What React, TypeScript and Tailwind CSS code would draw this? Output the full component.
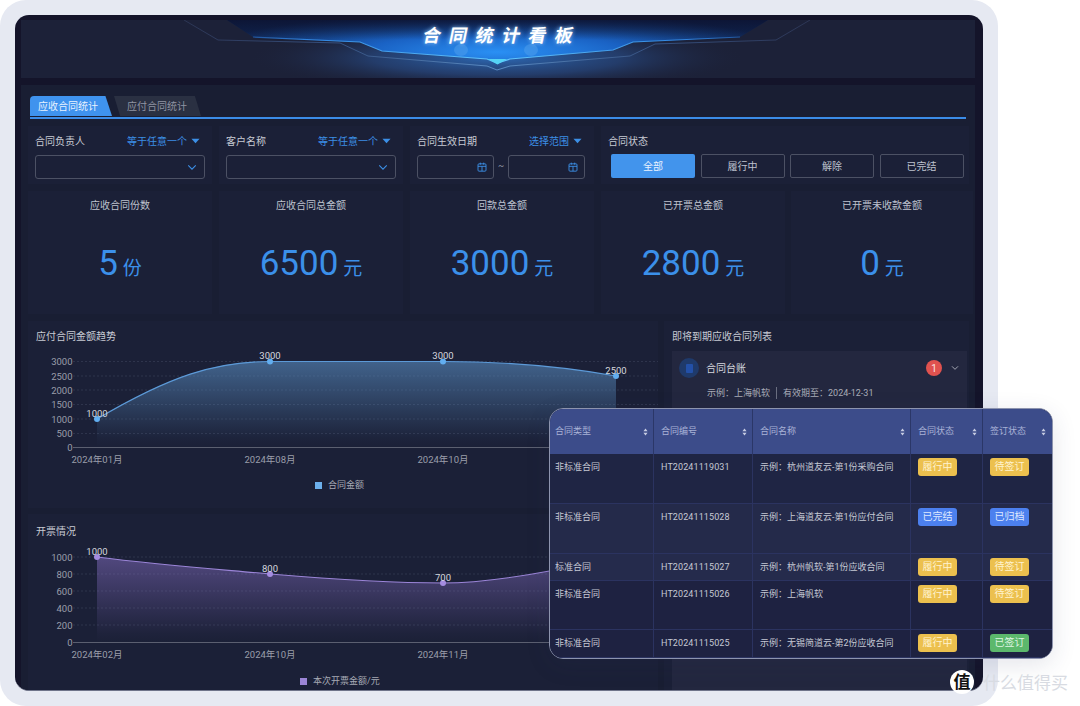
import React from "react";

const FONT = "font-['Roboto','Noto_Sans_CJK_SC',sans-serif]";

function Chevron({ className }: { className: string }) {
  return (
    <svg viewBox="0 0 12 8" className={className} fill="none" stroke="currentColor" strokeWidth="1.3">
      <path d="M1.5 1.5 6 6l4.5-4.5" />
    </svg>
  );
}

function Caret() {
  return (
    <svg viewBox="0 0 10 6" className="h-[6px] w-[9px] text-[#3c8fe6]" fill="currentColor">
      <path d="M0.5 0.5h9L5 5.5z" />
    </svg>
  );
}

function Calendar() {
  return (
    <svg viewBox="0 0 12 12" className="h-[10px] w-[10px] text-[#3c8fe6]" fill="none" stroke="currentColor" strokeWidth="1.1">
      <rect x="1.2" y="2.2" width="9.6" height="8.8" rx="1.2" />
      <path d="M1.2 5.2h9.6M4 .8v2.4M8 .8v2.4M6 5.2V11" />
    </svg>
  );
}

function Sort() {
  return (
    <svg viewBox="0 0 6 10" className="h-[8px] w-[5px] text-[#c6cce2]" fill="currentColor">
      <path d="M3 0.5 5.6 4.2H.4zM3 9.5.4 5.8h5.2z" />
    </svg>
  );
}

function FilterCard({ label, mode, children, wide }: { label: string; mode?: string; children: React.ReactNode; wide?: boolean }) {
  return (
    <div className={`h-[58px] shrink-0 bg-[#1b2037] px-[7px] pt-[8px] ${wide ? "w-[368px]" : "w-[184px]"}`}>
      <div className="flex h-[14px] items-center justify-between text-[10px] text-[#c8cbd4]">
        <span>{label}</span>
        {mode && (
          <span className="flex items-center gap-[4px] pr-[5px] text-[#3c8fe6]">
            {mode}
            <Caret />
          </span>
        )}
      </div>
      {children}
    </div>
  );
}

function Select() {
  return (
    <div className="mt-[7px] flex h-[24px] w-[170px] items-center justify-end rounded-[3px] border border-[#4c5164] pr-[7px] text-[#3c8fe6]">
      <Chevron className="h-[7px] w-[10px]" />
    </div>
  );
}

function DateBox() {
  return (
    <div className="flex h-[24px] w-[77px] items-center justify-end rounded-[3px] border border-[#4c5164] pr-[6px]">
      <Calendar />
    </div>
  );
}

function Stat({ label, value, unit, last }: { label: string; value: string; unit: string; last?: boolean }) {
  return (
    <div className={`flex h-[123px] shrink-0 flex-col items-center bg-[#1b2037] pt-[8px] ${last ? "ml-[-1px] w-[182px]" : "w-[184px]"}`}>
      <div className="h-[14px] text-[10px] leading-[14px] text-[#bfc3cf]">{label}</div>
      <div className="mt-[30px] flex items-baseline gap-[5px] text-[#3b90ea]">
        <span className="text-[35px] leading-[42px]">{value}</span>
        <span className="text-[19px] leading-[24px]">{unit}</span>
      </div>
    </div>
  );
}

function TrendChart() {
  const grid = [361.5, 376, 390, 404.5, 419, 433.5];
  const ticks = ["3000", "2500", "2000", "1500", "1000", "500", "0"];
  const ys = [361.5, 376, 390, 404.5, 419, 433.5, 447.5];
  const pts: [number, number, string][] = [[97, 419, "1000"], [270, 361.5, "3000"], [443, 361.5, "3000"], [616, 376, "2500"]];
  const line = "M97 419C170 376 215 361.5 270 361.5C330 361.5 385 361.5 443 361.5C505 361.5 565 367 616 376";
  const labels: [number, string][] = [[97, "2024年01月"], [270, "2024年08月"], [443, "2024年10月"], [616, "2024年12月"]];
  return (
    <svg viewBox="28 351 630 157" className="block h-[157px] w-[630px] overflow-visible">
      <defs>
        <linearGradient id="blueFill" gradientUnits="userSpaceOnUse" x1="0" y1="361" x2="0" y2="447">
          <stop offset="0" stopColor="#5a8fc4" stopOpacity="0.6" />
          <stop offset="0.9" stopColor="#5a8fc4" stopOpacity="0.03" />
          <stop offset="1" stopColor="#5a8fc4" stopOpacity="0" />
        </linearGradient>
      </defs>
      {grid.map((y) => (
        <line key={y} x1="73" x2="658" y1={y} y2={y} stroke="#343a52" strokeWidth="0.8" strokeDasharray="2 2" />
      ))}
      <path d={`${line}L616 447L97 447Z`} fill="url(#blueFill)" />
      <path d={line} fill="none" stroke="#5c9ad8" strokeWidth="1.1" />
      <line x1="73" x2="658" y1="447.5" y2="447.5" stroke="#5b5f70" strokeWidth="1.2" />
      {ticks.map((t, i) => (
        <text key={t} x="72.5" y={ys[i] + 3.5} textAnchor="end" fontSize="9.5" fill="#9a9eaa">{t}</text>
      ))}
      {pts.map(([x, y, v]) => (
        <g key={x}>
          <circle cx={x} cy={y} r="3" fill="#62aef0" />
          <text x={x} y={y - 2.5} textAnchor="middle" fontSize="9.5" fill="#d5d7de">{v}</text>
        </g>
      ))}
      {labels.map(([x, v]) => (
        <text key={x} x={x} y="463" textAnchor="middle" fontSize="9.5" fill="#9a9eaa">{v}</text>
      ))}
    </svg>
  );
}

function InvoiceChart() {
  const grid = [557, 574, 591, 608, 625];
  const ticks = ["1000", "800", "600", "400", "200", "0"];
  const ys = [557, 574, 591, 608, 625, 642.5];
  const pts: [number, number, string][] = [[97, 557, "1000"], [270, 574, "800"], [443, 583, "700"], [616, 557, "1000"]];
  const line = "M97 557C160 565 215 569 270 574C330 579 390 583 443 583C495 583 560 570 616 557";
  const labels: [number, string][] = [[97, "2024年02月"], [270, "2024年10月"], [443, "2024年11月"], [616, "2024年12月"]];
  return (
    <svg viewBox="28 546 630 144" className="block h-[144px] w-[630px] overflow-visible">
      <defs>
        <linearGradient id="purpleFill" gradientUnits="userSpaceOnUse" x1="0" y1="557" x2="0" y2="642">
          <stop offset="0" stopColor="#8c74cc" stopOpacity="0.48" />
          <stop offset="0.9" stopColor="#8c74cc" stopOpacity="0.03" />
          <stop offset="1" stopColor="#8c74cc" stopOpacity="0" />
        </linearGradient>
      </defs>
      {grid.map((y) => (
        <line key={y} x1="73" x2="658" y1={y} y2={y} stroke="#343a52" strokeWidth="0.8" strokeDasharray="2 2" />
      ))}
      <path d={`${line}L616 642.5L97 642.5Z`} fill="url(#purpleFill)" />
      <path d={line} fill="none" stroke="#9b85d8" strokeWidth="1.1" />
      <line x1="73" x2="658" y1="642.5" y2="642.5" stroke="#5b5f70" strokeWidth="1.2" />
      {ticks.map((t, i) => (
        <text key={t} x="72.5" y={ys[i] + 3.5} textAnchor="end" fontSize="9.5" fill="#9a9eaa">{t}</text>
      ))}
      {pts.map(([x, y, v]) => (
        <g key={x}>
          <circle cx={x} cy={y} r="3" fill="#a48ce0" />
          <text x={x} y={y - 2.5} textAnchor="middle" fontSize="9.5" fill="#d5d7de">{v}</text>
        </g>
      ))}
      {labels.map(([x, v]) => (
        <text key={x} x={x} y="658" textAnchor="middle" fontSize="9.5" fill="#9a9eaa">{v}</text>
      ))}
    </svg>
  );
}

function Header() {
  const shape = "M227 20 253 37 360 42 382 51 487 59 497 63 510 59 613 50 633 42 740 37 768 20Z";
  return (
    <div className="relative h-[58px] bg-[#1c2138]">
      <svg viewBox="21 20 954 58" className="block h-[58px] w-[954px]">
        <defs>
          <radialGradient id="glowLow" gradientUnits="userSpaceOnUse" cx="0" cy="0" r="1" gradientTransform="translate(497 58) scale(250 34)">
            <stop offset="0" stopColor="#2f74c8" stopOpacity="0.85" />
            <stop offset="0.5" stopColor="#2a5394" stopOpacity="0.55" />
            <stop offset="1" stopColor="#1c2138" stopOpacity="0" />
          </radialGradient>
          <radialGradient id="glowTop" gradientUnits="userSpaceOnUse" cx="0" cy="0" r="1" gradientTransform="translate(497 52) scale(290 40)">
            <stop offset="0" stopColor="#2a90f4" />
            <stop offset="0.45" stopColor="#1a62c4" />
            <stop offset="1" stopColor="#10244e" />
          </radialGradient>
          <linearGradient id="topFade" gradientUnits="userSpaceOnUse" x1="0" y1="20" x2="0" y2="40">
            <stop offset="0" stopColor="#0c1230" stopOpacity="0.8" />
            <stop offset="1" stopColor="#0c1230" stopOpacity="0" />
          </linearGradient>
          <linearGradient id="brightLine" gradientUnits="userSpaceOnUse" x1="227" y1="0" x2="768" y2="0">
            <stop offset="0" stopColor="#1b3f7c" />
            <stop offset="0.15" stopColor="#2f82de" />
            <stop offset="0.5" stopColor="#63c8ff" />
            <stop offset="0.85" stopColor="#2f82de" />
            <stop offset="1" stopColor="#1b3f7c" />
          </linearGradient>
          <linearGradient id="dimLine" gradientUnits="userSpaceOnUse" x1="184" y1="0" x2="810" y2="0">
            <stop offset="0" stopColor="#2c3554" />
            <stop offset="0.25" stopColor="#35507f" />
            <stop offset="0.5" stopColor="#5a8cc4" />
            <stop offset="0.75" stopColor="#35507f" />
            <stop offset="1" stopColor="#2c3554" />
          </linearGradient>
        </defs>
        <rect x="21" y="20" width="954" height="58" fill="url(#glowLow)" />
        <path d={shape} fill="url(#glowTop)" />
        <path d={shape} fill="url(#topFade)" />
        <path d="M184 20 218 40 340 43 368 56 487 66 497 70 510 66 630 56 655 44 776 40 810 20" fill="none" stroke="url(#dimLine)" strokeWidth="1" />
        <path d="M253 37 360 42 382 51 487 59 497 63 510 59 613 50 633 42 740 37" fill="none" stroke="url(#brightLine)" strokeWidth="1.2" />
        <path d="M488 59h19l-9.500 5.500z" fill="#55d4f6" />
        <ellipse cx="461" cy="50" rx="7" ry="6" fill="#5ca8ee" fillOpacity="0.4" />
        <ellipse cx="531" cy="50" rx="7" ry="6" fill="#5ca8ee" fillOpacity="0.4" />
      </svg>
      <div className="absolute left-[402px] top-[4px] -skew-x-12 text-[18px] font-bold leading-[24px] tracking-[8.4px] whitespace-nowrap text-white [text-shadow:0_0_4px_#9fd0ff]">
        合同统计看板
      </div>
    </div>
  );
}

type Tag = { t: string; c: string };
const yellow = "bg-[#ecc04e] text-[#fff3cf]";
const blue = "bg-[#4c80ee] text-[#dfe9ff]";
const green = "bg-[#5cb86c] text-[#dff5e2]";

const rows: { h: string; bg: string; type: string; no: string; name: string; a: Tag; b: Tag }[] = [
  { h: "h-[50px]", bg: "bg-[#1f2544]", type: "非标准合同", no: "HT20241119031", name: "示例：杭州道友云-第1份采购合同", a: { t: "履行中", c: yellow }, b: { t: "待签订", c: yellow } },
  { h: "h-[50px]", bg: "bg-[#242a4a]", type: "非标准合同", no: "HT20241115028", name: "示例：上海道友云-第1份应付合同", a: { t: "已完结", c: blue }, b: { t: "已归档", c: blue } },
  { h: "h-[27px]", bg: "bg-[#252b4c]", type: "标准合同", no: "HT20241115027", name: "示例：杭州帆软-第1份应收合同", a: { t: "履行中", c: yellow }, b: { t: "待签订", c: yellow } },
  { h: "h-[49px]", bg: "bg-[#1e2241]", type: "非标准合同", no: "HT20241115026", name: "示例：上海帆软", a: { t: "履行中", c: yellow }, b: { t: "待签订", c: yellow } },
  { h: "h-[28px]", bg: "bg-[#1e2241]", type: "非标准合同", no: "HT20241115025", name: "示例：无锡简道云-第2份应收合同", a: { t: "履行中", c: yellow }, b: { t: "已签订", c: green } },
];

function Badge({ tag }: { tag: Tag }) {
  return <span className={`mt-[4px] flex h-[18px] w-[39px] items-center justify-center rounded-[3px] text-[10px] ${tag.c}`}>{tag.t}</span>;
}

function HeadCell({ w, label, first, last }: { w: string; label: string; first?: boolean; last?: boolean }) {
  return (
    <div className={`flex h-full items-center justify-between pr-[5px] ${first ? "pl-[5px]" : "pl-[7px]"} ${w} ${last ? "" : "border-r border-[#2b3768]"}`}>
      <span>{label}</span>
      <Sort />
    </div>
  );
}

function Table() {
  return (
    <div className="absolute left-[549px] top-[408px] h-[251px] w-[504px] overflow-hidden rounded-[14px] border-[1.5px] border-[#8d94ae] bg-[#1e2241] shadow-[0_6px_24px_rgba(40,50,90,0.12)]">
      <div className="flex h-[45px] bg-[#3c4c8a] text-[9px] text-[#a9b2d6]">
        <HeadCell w="w-[104px]" label="合同类型" first />
        <HeadCell w="w-[99px]" label="合同编号" />
        <HeadCell w="w-[158px]" label="合同名称" />
        <HeadCell w="w-[72px]" label="合同状态" />
        <HeadCell w="w-[68px]" label="签订状态" last />
      </div>
      {rows.map((r) => (
        <div key={r.no} className={`flex border-b border-[#2b3360] text-[9px] leading-[14px] text-[#c6c9d4] ${r.h} ${r.bg}`}>
          <div className="w-[104px] border-r border-[#2b3360] pl-[5px] pt-[6px]">{r.type}</div>
          <div className="w-[99px] border-r border-[#2b3360] pl-[7px] pt-[6px] tracking-[0.1px]">{r.no}</div>
          <div className="w-[158px] border-r border-[#2b3360] pl-[7px] pt-[6px]">{r.name}</div>
          <div className="w-[72px] border-r border-[#2b3360] pl-[7px]"><Badge tag={r.a} /></div>
          <div className="w-[68px] pl-[7px]"><Badge tag={r.b} /></div>
        </div>
      ))}
    </div>
  );
}

export default function App() {
  return (
    <div className={`relative h-[706px] w-[1080px] overflow-hidden bg-white ${FONT}`}>
      <div className="h-[706px] w-[998px] rounded-[26px] bg-[#e6e9f2] p-[15px]">
        <div className="h-[676px] overflow-hidden rounded-[14px] border-b border-[#6f748a] bg-[#14142a] pl-[6px] pr-[8px] pt-[5px]">
          <Header />
          <div className="mt-[7px] h-[606px] bg-[#191e33] px-[7px] pt-[11px]">
            <div className="ml-[2px] mr-[2px] flex h-[23px] gap-[2px] border-b-2 border-[#3b8ce8]">
              <div className="flex h-[20px] w-[82px] items-center rounded-tl-[4px] bg-[#3f93ee] pl-[8px] text-[10px] text-[#e8f2ff] [clip-path:polygon(0_0,92%_0,100%_100%,0_100%)]">
                应收合同统计
              </div>
              <div className="flex h-[20px] w-[87px] items-center bg-[#2a3042] pl-[13px] text-[10px] text-[#8f94a3] [clip-path:polygon(0_0,93%_0,100%_100%,7%_100%)]">
                应付合同统计
              </div>
            </div>
            <div className="mt-[7px] flex gap-[7px]">
              <FilterCard label="合同负责人" mode="等于任意一个"><Select /></FilterCard>
              <FilterCard label="客户名称" mode="等于任意一个"><Select /></FilterCard>
              <FilterCard label="合同生效日期" mode="选择范围">
                <div className="mt-[7px] flex items-center">
                  <DateBox />
                  <span className="w-[14px] text-center text-[9px] text-[#9a9eaa]">~</span>
                  <DateBox />
                </div>
              </FilterCard>
              <FilterCard label="合同状态" wide>
                <div className="mt-[6px] flex gap-[5.5px] pl-[3px] text-[10px] text-[#bfc3cf]">
                  <div className="flex h-[24px] w-[84px] shrink-0 items-center justify-center rounded-[2px] bg-[#4294ec] text-[#e8f2ff]">全部</div>
                  <div className="flex h-[24px] w-[84px] shrink-0 items-center justify-center rounded-[2px] border border-[#4c5164]">履行中</div>
                  <div className="flex h-[24px] w-[84px] shrink-0 items-center justify-center rounded-[2px] border border-[#4c5164]">解除</div>
                  <div className="flex h-[24px] w-[84px] shrink-0 items-center justify-center rounded-[2px] border border-[#4c5164]">已完结</div>
                </div>
              </FilterCard>
            </div>
            <div className="mt-[7px] flex gap-[7px]">
              <Stat label="应收合同份数" value="5" unit="份" />
              <Stat label="应收合同总金额" value="6500" unit="元" />
              <Stat label="回款总金额" value="3000" unit="元" />
              <Stat label="已开票总金额" value="2800" unit="元" />
              <Stat label="已开票未收款金额" value="0" unit="元" last />
            </div>
            <div className="mt-[7px] flex gap-[6px]">
              <div className="w-[630px] shrink-0">
                <div className="relative h-[187px] bg-[#1b2037]">
                  <div className="flex h-[30px] items-center pl-[8px] text-[10px] text-[#c8cbd4]">应付合同金额趋势</div>
                  <TrendChart />
                  <div className="absolute left-[287px] top-[158px] flex items-center gap-[3px] text-[9px] text-[#a6a9b4]">
                    <span className="h-[7px] w-[7px] bg-[#6cb0ec]" />
                    <span className="ml-[3px]">合同金额</span>
                  </div>
                </div>
                <div className="relative mt-[6px] h-[176px] bg-[#1b2037]">
                  <div className="flex h-[32px] items-center pl-[8px] pt-[2px] text-[10px] text-[#c8cbd4]">开票情况</div>
                  <InvoiceChart />
                  <div className="absolute left-[272px] top-[161px] flex items-center gap-[3px] text-[9px] text-[#a6a9b4]">
                    <span className="h-[7px] w-[7px] bg-[#9b85d6]" />
                    <span className="ml-[3px]">本次开票金额/元</span>
                  </div>
                </div>
              </div>
              <div className="h-[369px] w-[305px] shrink-0 bg-[#1b2037] pl-[8px] pr-[2px]">
                <div className="flex h-[30px] items-center text-[10px] text-[#c8cbd4]">即将到期应收合同列表</div>
                <div className="h-[339px] bg-[#23273f] pl-[7px] pr-[8px] pt-[7px]">
                  <div className="flex h-[20px] items-center">
                    <div className="flex h-[20px] w-[20px] items-center justify-center rounded-full bg-[#1f3a6b]">
                      <div className="h-[9px] w-[7px] rounded-[1px] bg-[#2350a8]" />
                    </div>
                    <span className="ml-[7px] text-[10px] text-[#d5d7de]">合同台账</span>
                    <span className="ml-auto flex h-[16px] w-[16px] items-center justify-center rounded-full bg-[#e0524f] text-[10px] text-[#fde3e2]">1</span>
                    <Chevron className="ml-[9px] h-[6px] w-[8px] text-[#b8bbc6]" />
                  </div>
                  <div className="ml-[28px] mt-[9px] flex items-center text-[9px] leading-[12px] text-[#a9acb8]">
                    <span>示例：上海帆软</span>
                    <span className="mx-[6px] h-[12px] w-px bg-[#6a6e80]" />
                    <span>有效期至：2024-12-31</span>
                  </div>
                </div>
              </div>
            </div>
          </div>
        </div>
      </div>
      <Table />
      <div className="absolute left-[950px] top-[670px] flex h-[24px] w-[24px] items-center justify-center rounded-full bg-white text-[17px] font-bold leading-none text-[#111]">
        值
      </div>
      <div className="absolute left-[983px] top-[672px] text-[17px] leading-[22px] whitespace-nowrap text-[#d8dbe2]">
        什么值得买
      </div>
    </div>
  );
}
